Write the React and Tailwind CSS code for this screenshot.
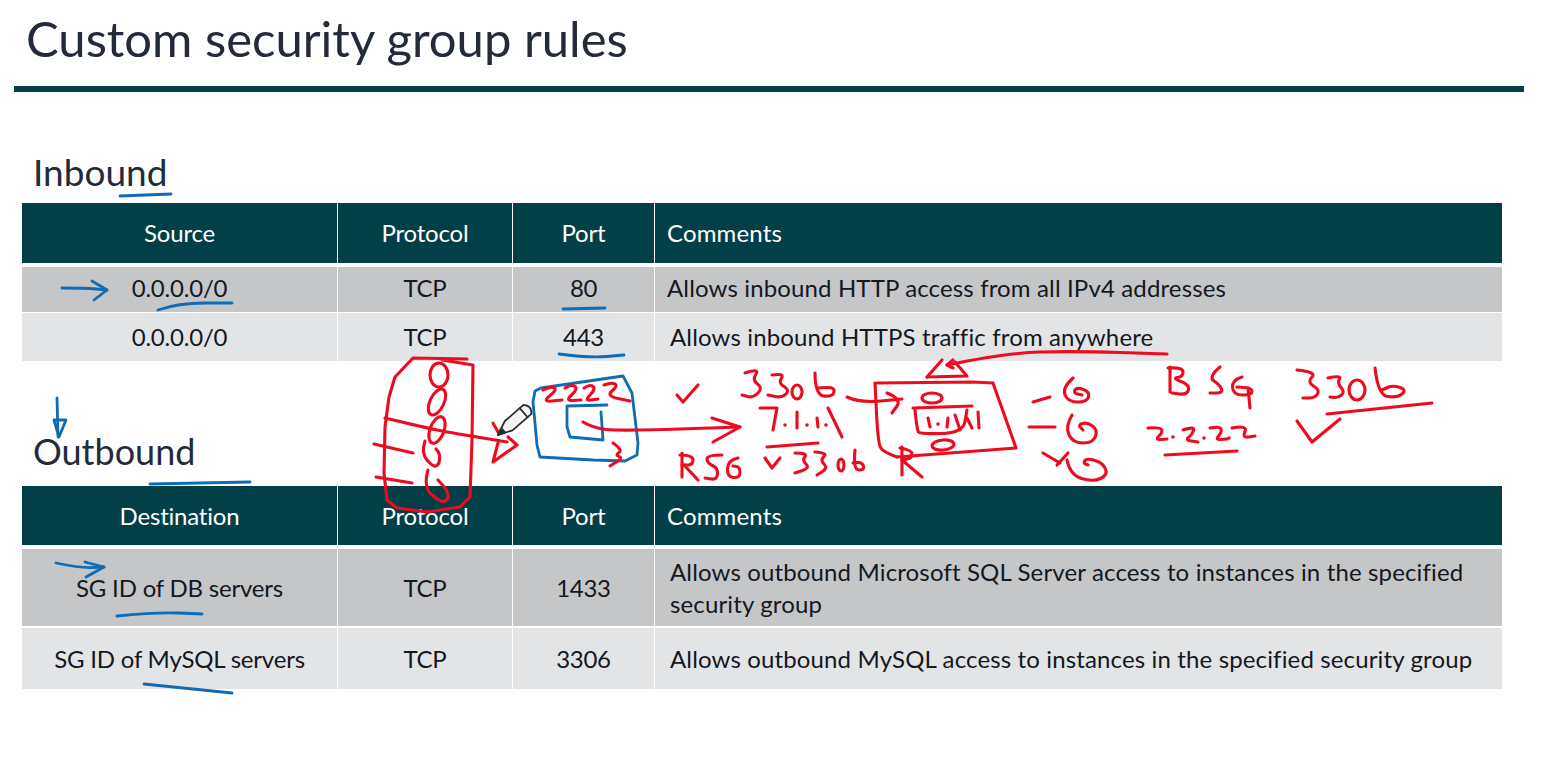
const curve = (pts) => {
  let d = `M${pts[0][0]} ${pts[0][1]}`;
  for (let i = 1; i < pts.length - 1; i++) {
    const mx = (pts[i][0] + pts[i + 1][0]) / 2;
    const my = (pts[i][1] + pts[i + 1][1]) / 2;
    d += ` Q${pts[i][0]} ${pts[i][1]} ${mx} ${my}`;
  }
  const last = pts[pts.length - 1];
  return d + ` L${last[0]} ${last[1]}`;
};

const line = (pts) => pts.map((p, i) => `${i ? "L" : "M"}${p[0]} ${p[1]}`).join(" ");

const blueInk = [
  line([[120, 196], [171, 194]]),
  curve([[62, 288], [85, 288], [107, 290]]),
  line([[92, 281], [107, 290], [94, 300]]),
  curve([[158, 310], [178, 303], [232, 303]]),
  line([[563, 309], [605, 308]]),
  curve([[559, 354], [589, 358], [624, 355]]),
  line([[57, 398], [58, 437]]),
  line([[54, 420], [59, 437], [66, 420], [54, 420]]),
  line([[150, 484], [250, 482]]),
  curve([[56, 563], [80, 568], [104, 567]]),
  line([[85, 562], [104, 567], [86, 577]]),
  curve([[117, 616], [156, 612], [202, 614]]),
  line([[144, 684], [232, 693]]),
  // security group box
  line([[533, 402], [535, 391], [541, 388], [623, 376], [632, 393], [638, 443], [637, 455], [625, 461], [593, 460], [540, 457], [537, 445], [533, 402]]),
  line([[607, 405], [567, 406], [567, 427], [570, 437], [603, 440], [601, 412]]),
];

const redInk = [
  // servers box on the left
  line([[467, 359], [413, 358], [395, 377], [389, 397], [385, 427], [384, 473], [387, 500], [397, 508], [427, 512], [460, 507], [470, 497], [472, 440], [473, 365], [442, 360]]),
  curve([[425, 441], [421, 453], [433, 467], [439, 465], [440, 454], [436, 449]]),
  curve([[428, 470], [423, 487], [441, 503], [449, 499], [447, 490], [438, 480]]),
  curve([[385, 418], [427, 428], [447, 432], [507, 442]]),
  line([[508, 437], [517, 445], [493, 462], [498, 443]]),
  line([[493, 423], [498, 432]]),
  line([[374, 444], [413, 453]]),
  line([[376, 477], [412, 483]]),
  // 2222
  curve([[543, 390], [552, 386], [557, 390], [542, 402], [562, 400]]),
  curve([[565, 388], [572, 384], [578, 389], [565, 401], [581, 400]]),
  curve([[584, 388], [590, 384], [596, 389], [584, 401], [598, 399]]),
  curve([[604, 385], [612, 382], [618, 386], [606, 396], [630, 401]]),
  line([[677, 395], [683, 402], [698, 385]]),
  curve([[583, 422], [593, 428], [620, 431], [740, 427]]),
  line([[712, 418], [740, 427], [713, 442]]),
  curve([[613, 443], [623, 450], [615, 455], [623, 458], [610, 466]]),
  // RSG
  line([[682, 453], [682, 477]]),
  curve([[680, 455], [693, 455], [693, 465], [682, 465]]),
  line([[684, 465], [698, 480]]),
  curve([[722, 455], [707, 455], [707, 463], [718, 468], [717, 480], [705, 478]]),
  curve([[738, 458], [728, 460], [727, 477], [740, 478], [740, 467], [733, 466]]),
  // 3306
  curve([[745, 373], [760, 368], [752, 380], [763, 388], [753, 398], [742, 395]]),
  curve([[772, 375], [785, 373], [778, 383], [790, 390], [782, 398], [768, 395]]),
  curve([[815, 373], [815, 395], [833, 397], [835, 387], [817, 388]]),
  // 7.1.1.1
  line([[760, 408], [777, 408], [773, 430]]),
  line([[797, 412], [797, 428]]),
  line([[817, 418], [818, 427]]),
  line([[828, 408], [842, 437]]),
  line([[767, 447], [818, 443]]),
  // v3306
  line([[765, 458], [772, 468], [780, 458]]),
  curve([[795, 453], [808, 453], [802, 460], [810, 468], [795, 473]]),
  curve([[815, 452], [828, 453], [820, 460], [828, 468], [817, 475]]),
  curve([[855, 450], [853, 470], [865, 470], [862, 462], [853, 463]]),
  // arrow into the R box
  curve([[847, 397], [860, 403], [902, 399]]),
  curve([[887, 393], [902, 399], [892, 413]]),
  line([[877, 383], [973, 382], [993, 383], [1016, 448], [897, 457]]),
  curve([[897, 457], [883, 452], [878, 443], [875, 383]]),
  line([[927, 377], [942, 360]]),
  line([[955, 362], [967, 376], [927, 377]]),
  curve([[947, 365], [1007, 353], [1073, 351], [1167, 354]]),
  line([[953, 360], [947, 365], [953, 368]]),
  line([[913, 408], [972, 406]]),
  curve([[915, 410], [917, 430], [920, 434], [963, 433], [967, 410]]),
  line([[928, 418], [930, 427]]),
  line([[948, 418], [947, 427]]),
  line([[955, 415], [960, 430]]),
  line([[967, 418], [972, 428]]),
  line([[978, 412], [979, 428]]),
  line([[902, 447], [902, 475]]),
  curve([[900, 448], [912, 450], [912, 458], [902, 460]]),
  line([[902, 460], [922, 477]]),
  // the three instances on the right
  line([[1033, 402], [1050, 397]]),
  line([[1029, 427], [1055, 427]]),
  line([[1043, 453], [1060, 463]]),
  line([[1068, 453], [1057, 465]]),
  curve([[1073, 378], [1062, 388], [1068, 402], [1087, 402], [1090, 392], [1077, 387], [1073, 393], [1082, 395]]),
  curve([[1072, 415], [1065, 427], [1073, 443], [1093, 443], [1098, 430], [1087, 422], [1078, 425], [1083, 430]]),
  curve([[1067, 460], [1070, 475], [1093, 482], [1108, 475], [1103, 463], [1087, 458], [1083, 463], [1088, 465]]),
  // B SG 3306
  line([[1170, 367], [1170, 392]]),
  curve([[1168, 368], [1183, 367], [1183, 377], [1172, 378], [1190, 385], [1187, 395], [1172, 393]]),
  curve([[1220, 367], [1208, 377], [1220, 385], [1223, 393], [1210, 393]]),
  curve([[1242, 377], [1232, 380], [1233, 395], [1252, 395], [1252, 388], [1237, 387]]),
  line([[1248, 388], [1250, 408]]),
  curve([[1297, 370], [1317, 372], [1307, 382], [1320, 390], [1315, 398], [1303, 398]]),
  curve([[1328, 378], [1342, 375], [1337, 383], [1345, 392], [1338, 398], [1330, 397]]),
  curve([[1375, 368], [1378, 395], [1397, 398], [1407, 390], [1393, 385], [1382, 390]]),
  line([[1327, 414], [1432, 403]]),
  // 2.2.2.2
  curve([[1148, 428], [1160, 427], [1163, 432], [1155, 440], [1167, 439]]),
  curve([[1183, 430], [1195, 426], [1192, 435], [1185, 440], [1198, 442]]),
  curve([[1210, 428], [1220, 426], [1222, 432], [1215, 440], [1227, 439]]),
  curve([[1232, 428], [1248, 425], [1242, 438], [1255, 436]]),
  line([[1165, 455], [1237, 451]]),
  line([[1297, 421], [1312, 442], [1340, 419]]),
];

const redRings = [
  [439, 375, 9, 12, 0],
  [437, 402, 7, 14, 25],
  [437, 430, 7, 14, 20],
  [797, 392, 5, 7, 0],
  [932, 398, 10, 5, 0],
  [943, 445, 11, 5, -5],
  [841, 465, 3, 6, 0],
  [1357, 390, 8, 10, 0],
];

const redDots = [
  [785, 425], [807, 425], [826, 425], [938, 424], [1173, 437], [1204, 438], [1229, 438],
];

function Ink() {
  return (
    <svg className="absolute inset-0 pointer-events-none" width="1554" height="773" fill="none" strokeLinecap="round" strokeLinejoin="round">
      <g stroke="#0f6cb5" strokeWidth="2.8">
        {blueInk.map((d, i) => <path key={i} d={d} />)}
      </g>
      <g stroke="#ee0a1f" strokeWidth="3.1">
        {redInk.map((d, i) => <path key={i} d={d} />)}
        {redRings.map(([cx, cy, rx, ry, rot], i) => (
          <ellipse key={i} cx={cx} cy={cy} rx={rx} ry={ry} transform={`rotate(${rot} ${cx} ${cy})`} />
        ))}
      </g>
      <g fill="#ee0a1f">
        {redDots.map(([cx, cy], i) => <circle key={i} cx={cx} cy={cy} r="1.8" />)}
      </g>
      {/* pen cursor */}
      <g transform="rotate(49 498 435)" stroke="#2b2b2b" strokeWidth="1.8">
        <path d="M498 435 L492 421 L492 396 Q498 390 504 396 L504 421 Z" fill="#f4f4f4" />
        <path d="M492 401 L504 401" />
        <path d="M498 435 L495 428 L501 428 Z" fill="#2b2b2b" />
      </g>
    </svg>
  );
}

const COLS = "grid grid-cols-[315px_174px_141px_847px] gap-x-px";

function HeaderRow({ first, h }) {
  return (
    <div className={`${COLS} ${h} text-[24px] text-white`}>
      <div className="bg-[#023f47] flex items-center justify-center tracking-[-0.2px]">{first}</div>
      <div className="bg-[#023f47] flex items-center justify-center tracking-[-0.2px]">Protocol</div>
      <div className="bg-[#023f47] flex items-center justify-center tracking-[-0.2px]">Port</div>
      <div className="bg-[#023f47] flex items-center pl-3 tracking-[0.15px]">Comments</div>
    </div>
  );
}

function Row({ a, port, note, h, bg, pad = "pl-[15px]", shift = "" }) {
  return (
    <div className={`${COLS} ${h} text-[24px] text-[#14181f]`}>
      <div className={`${bg} ${shift} flex items-center justify-center tracking-[-0.2px]`}>{a}</div>
      <div className={`${bg} ${shift} flex items-center justify-center tracking-[-0.3px]`}>TCP</div>
      <div className={`${bg} ${shift} flex items-center justify-center tracking-[-0.3px]`}>{port}</div>
      <div className={`${bg} ${shift} flex items-center ${pad} pr-[16px] leading-[32px] tracking-[0.14px]`}><span>{note}</span></div>
    </div>
  );
}

export default function App() {
  return (
    <div className="relative min-h-screen w-[1554px] h-[773px] overflow-hidden bg-white font-['Lato',sans-serif]">
      <div className="h-[86px] flex items-center pl-[26px] pb-[8px]">
        <h1 className="text-[49px] text-[#232b3a] font-normal">Custom security group rules</h1>
      </div>
      <div className="ml-[14px] w-[1510px] h-[6px] bg-[#023f47]" />

      <div className="h-[111px] flex items-end pl-[33px] pb-[9px]">
        <h2 className="text-[37px] leading-[44px] text-[#232b3a] font-normal">Inbound</h2>
      </div>
      <div className="ml-[22px] w-[1480px]">
        <HeaderRow first="Source" h="h-[60px]" />
        <div className="mt-1 flex flex-col gap-px">
          <Row a="0.0.0.0/0" port="80" note="Allows inbound HTTP access from all IPv4 addresses" h="h-[45px]" bg="bg-[#c4c6c8]" pad="pl-3" shift="pb-[3px]" />
          <Row a="0.0.0.0/0" port="443" note="Allows inbound HTTPS traffic from anywhere" h="h-[48px]" bg="bg-[#e3e4e6]" />
        </div>
      </div>

      <div className="h-[125px] flex items-end pl-[33px] pb-[13px]">
        <h2 className="text-[36px] leading-[44px] text-[#232b3a] font-normal">Outbound</h2>
      </div>
      <div className="ml-[22px] w-[1480px]">
        <HeaderRow first="Destination" h="h-[59px]" />
        <div className="mt-1 flex flex-col gap-[2px]">
          <Row a="SG ID of DB servers" port="1433" note="Allows outbound Microsoft SQL Server access to instances in the specified security group" h="h-[77px]" bg="bg-[#c4c6c8]" />
          <Row a="SG ID of MySQL servers" port="3306" note="Allows outbound MySQL access to instances in the specified security group" h="h-[61px]" bg="bg-[#e3e4e6]" />
        </div>
      </div>

      <Ink />
    </div>
  );
}
